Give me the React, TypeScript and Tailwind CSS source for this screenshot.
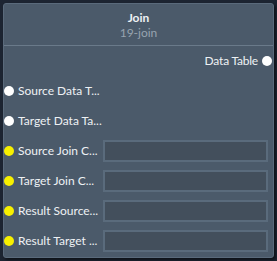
import React from 'react';

const inputs = ['Source Data T...', 'Target Data Ta...'];
const joins = ['Source Join C...', 'Target Join C...', 'Result Source...', 'Result Target ...'];

function Dot({ yellow }: { yellow?: boolean }) {
  return (
    <span
      className={`block w-[10px] h-[10px] rounded-full shrink-0 ${yellow ? 'bg-[#f7f000]' : 'bg-white'}`}
    />
  );
}

export default function App() {
  return (
    <div
      className="w-[277px] h-[261px] bg-[#1c2431] pl-[3px] pt-[3px] overflow-hidden"
      style={{ fontFamily: 'Lato, "Open Sans", sans-serif' }}
    >
      <div className="w-[271px] h-[255px] bg-[#4b5a6a] border border-[#5a6a7b] rounded-[3px] shadow-[2px_2px_3px_rgba(0,0,0,0.5)] text-[12px] text-[#eef1f4]">
        <div className="h-[42px] flex flex-col items-center justify-center border-b border-[#6a7a8a]">
          <div className="font-bold leading-[15px] mt-[1px]">Join</div>
          <div className="text-[#97a3af] leading-[15px]">19-join</div>
        </div>

        <div className="h-[30px] flex items-center justify-end gap-[4px] pr-[1px]">
          <span className="tracking-[-0.2px]">Data Table</span>
          <Dot />
        </div>

        {inputs.map((label) => (
          <div key={label} className="h-[30px] flex items-center gap-[4px]">
            <Dot />
            <span className="whitespace-nowrap">{label}</span>
          </div>
        ))}

        {joins.map((label) => (
          <div key={label} className="h-[30px] flex items-center">
            <Dot yellow />
            <span className="w-[89px] pl-[4px] whitespace-nowrap overflow-hidden">{label}</span>
            <input
              className="w-[165px] h-[22px] bg-[#434f5c] border-2 border-[#5a6b7c] outline-none text-[#eef1f4] px-1"
              type="text"
            />
          </div>
        ))}
      </div>
    </div>
  );
}
